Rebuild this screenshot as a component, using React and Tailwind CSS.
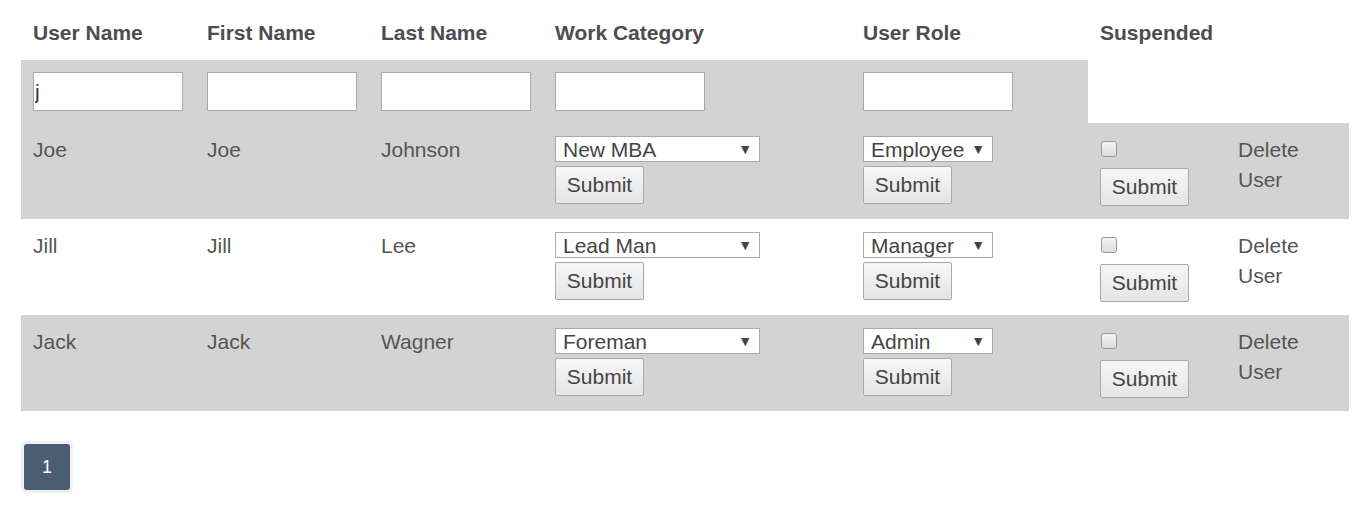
import React from "react";

const rows = [
  { u: "Joe", f: "Joe", l: "Johnson", cat: "New MBA", role: "Employee", gray: true },
  { u: "Jill", f: "Jill", l: "Lee", cat: "Lead Man", role: "Manager", gray: false },
  { u: "Jack", f: "Jack", l: "Wagner", cat: "Foreman", role: "Admin", gray: true },
];

function Sel({ value, w }) {
  return (
    <div
      className="relative h-[26px] border border-[#a9a9a9] bg-white pl-[7px] text-[21px] leading-[26px] text-[#444]"
      style={{ width: w }}
    >
      {value}
      <span className="absolute right-[7px] top-[0px] text-[14px] leading-[24px] text-[#444]">▼</span>
    </div>
  );
}

function Btn({ className = "" }) {
  return (
    <button
      className={
        "block h-[38px] w-[89px] rounded-[2px] border border-[#a9a9a9] bg-gradient-to-b from-[#f7f7f7] to-[#e4e4e4] text-[21px] leading-[36px] text-[#444] " +
        className
      }
    >
      Submit
    </button>
  );
}

export default function App() {
  return (
    <div
      className="min-h-[512px] bg-white pl-[21px] text-[#555]"
      style={{ fontFamily: '"Liberation Sans", Arial, sans-serif' }}
    >
      <table className="table-fixed border-collapse text-[21px] leading-[30px]">
        <colgroup>
          <col className="w-[174px]" />
          <col className="w-[174px]" />
          <col className="w-[174px]" />
          <col className="w-[308px]" />
          <col className="w-[237px]" />
          <col className="w-[138px]" />
          <col className="w-[123px]" />
        </colgroup>
        <thead>
          <tr className="h-[60px]">
            {["User Name", "First Name", "Last Name", "Work Category", "User Role", "Suspended", ""].map((h, i) => (
              <th key={i} className="px-[12px] pt-[18px] pb-[12px] text-left align-top font-bold text-[#4f4b50]">
                {h}
              </th>
            ))}
          </tr>
          <tr className="h-[63px]">
            {[0, 1, 2, 3, 4].map((i) => (
              <td key={i} className="bg-[#d3d3d3] px-[12px] align-middle">
                <input
                  readOnly
                  value={i === 0 ? "j" : ""}
                  className="block h-[39px] w-[150px] border border-[#a9a9a9] bg-white px-[1px] text-[21px] text-[#333] outline-none"
                />
              </td>
            ))}
            <td />
            <td />
          </tr>
        </thead>
        <tbody>
          {rows.map((r, idx) => (
            <tr key={idx} className={"h-[96px] " + (r.gray ? "bg-[#d3d3d3]" : "bg-white")}>
              <td className="px-[12px] pt-[12px] align-top">{r.u}</td>
              <td className="px-[12px] pt-[12px] align-top">{r.f}</td>
              <td className="px-[12px] pt-[12px] align-top">{r.l}</td>
              <td className="px-[12px] pt-[13px] align-top">
                <Sel value={r.cat} w={205} />
                <Btn className="mt-[4px]" />
              </td>
              <td className="px-[12px] pt-[13px] align-top">
                <Sel value={r.role} w={130} />
                <Btn className="mt-[4px]" />
              </td>
              <td className="px-[12px] pt-[18px] align-top">
                <div className="ml-[1px] h-[16px] w-[16px] rounded-[3px] border border-[#9a9a9a] bg-gradient-to-b from-[#f4f4f4] to-[#dcdcdc]" />
                <Btn className="mt-[11px]" />
              </td>
              <td className="px-[12px] pt-[12px] align-top">
                Delete
                <br />
                User
              </td>
            </tr>
          ))}
        </tbody>
      </table>
      <div className="mt-[30px] inline-block rounded-[5px] bg-[#eef0f3] p-[3px]">
        <div className="flex h-[46px] w-[46px] items-center justify-center rounded-[3px] bg-[#4a5d73] text-[18px] text-white">
          1
        </div>
      </div>
    </div>
  );
}
